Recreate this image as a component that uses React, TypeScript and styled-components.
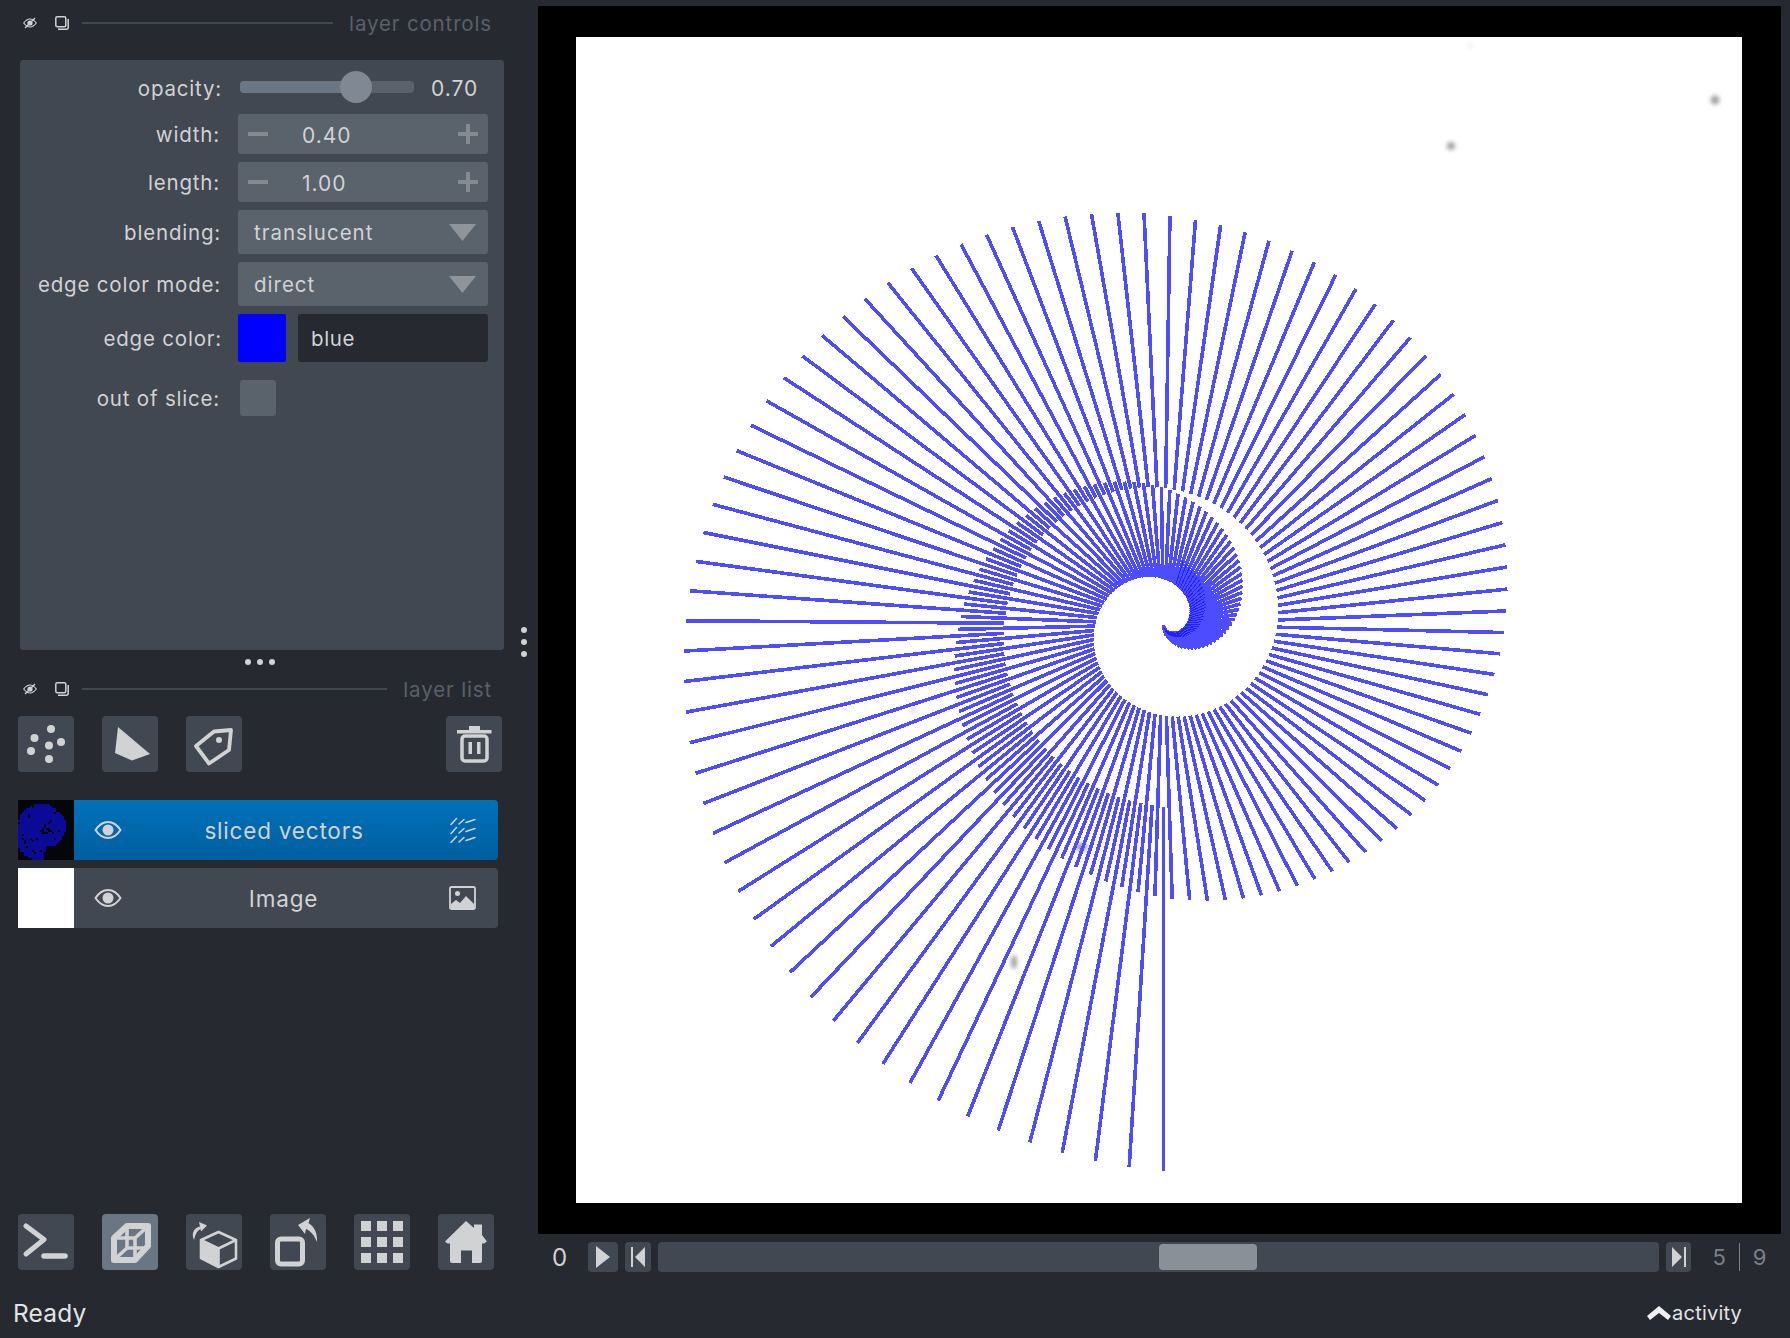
import React, { useMemo } from 'react';
import styled, { createGlobalStyle } from 'styled-components';

const GlobalStyle = createGlobalStyle`
  html, body {
    margin: 0;
    padding: 0;
    background: #262930;
  }
  body {
    width: 1790px;
    height: 1338px;
    overflow: hidden;
    font-family: Inter, "Liberation Sans", sans-serif;
    color: #d1d2d4;
  }
`;

const ICON = '#d1d2d4';

const Page = styled.div`
  width: 1790px;
  height: 1338px;
  display: flex;
  flex-direction: column;
`;

const Main = styled.div`
  height: 1272px;
  display: flex;
`;

const LeftColumn = styled.div`
  width: 515px;
  display: flex;
  flex-direction: column;
`;

const Splitter = styled.div`
  width: 23px;
  display: flex;
  flex-direction: column;
  align-items: center;
  gap: 6px;
  padding: 627px 5px 0 0;
  box-sizing: border-box;
`;

const Dot = styled.span`
  width: 6px;
  height: 6px;
  border-radius: 50%;
  background: #d1d2d4;
`;

const TitleBar = styled.div<{ $height: number }>`
  height: ${p => p.$height}px;
  display: flex;
  align-items: center;
  padding: 0 23px;
  flex: none;
`;

const TitleIcon = styled.svg`
  flex: none;
  display: block;
`;

const TitleRule = styled.div`
  flex: 1;
  height: 2px;
  background: #414851;
  margin: 0 16px 0 13px;
`;

const TitleText = styled.span`
  font-size: 20.5px;
  letter-spacing: 0.85px;
  color: #5a606a;
`;

const ControlsPanel = styled.div`
  margin: 14px 11px 0 20px;
  height: 590px;
  box-sizing: border-box;
  flex: none;
  background: #414851;
  border-radius: 3px;
  padding: 8px 16px 0 0;
  display: grid;
  grid-template-columns: 218px 250px;
  grid-auto-rows: min-content;
  row-gap: 8px;
`;

const Label = styled.div<{ $pad?: number; $top?: number }>`
  display: flex;
  align-items: center;
  justify-content: flex-end;
  padding-right: ${p => p.$pad ?? 18}px;
  padding-top: ${p => p.$top ?? 0}px;
  font-size: 20.5px;
  letter-spacing: 0.8px;
`;

const SliderRow = styled.div`
  height: 38px;
  display: flex;
  align-items: center;
  padding-left: 2px;
`;

const SliderTrack = styled.div`
  position: relative;
  width: 174px;
  height: 12px;
  border-radius: 4px;
  background: #5a626c;
`;

const SliderFill = styled.div`
  height: 100%;
  border-radius: 4px 0 0 4px;
  background: #6a7683;
`;

const SliderThumb = styled.div`
  position: absolute;
  top: -10px;
  width: 32px;
  height: 32px;
  margin-left: -16px;
  border-radius: 50%;
  background: #7f8893;
`;

const SliderValue = styled.span`
  margin: 2px 0 0 17px;
  font-size: 21px;
  letter-spacing: 1px;
`;

const SpinBox = styled.div`
  height: 40px;
  background: #5a626c;
  border-radius: 3px;
  display: flex;
  align-items: center;
  padding: 0 10px;
  font-size: 21px;
  letter-spacing: 1px;
`;

const SpinValue = styled.span`
  flex: 1;
  padding: 2px 0 0 34px;
`;

const Dropdown = styled.div`
  height: 44px;
  background: #5a626c;
  border-radius: 3px;
  display: flex;
  align-items: center;
  justify-content: space-between;
  padding: 0 12px 0 16px;
  font-size: 20.5px;
  letter-spacing: 1px;
`;

const ColorRow = styled.div`
  height: 48px;
  display: flex;
  gap: 12px;
`;

const Swatch = styled.div`
  width: 48px;
  background: #0000ff;
  border-radius: 2px;
`;

const ColorInput = styled.div`
  flex: 1;
  background: #262930;
  border-radius: 3px;
  display: flex;
  align-items: center;
  padding: 1px 0 0 13px;
  font-size: 20.5px;
  letter-spacing: 0.6px;
`;

const CheckRow = styled.div`
  height: 36px;
  margin-top: 10px;
  padding-left: 2px;
`;

const CheckBox = styled.div`
  width: 36px;
  height: 36px;
  background: #5a626c;
  border-radius: 3px;
`;

const HandleRow = styled.div`
  height: 26px;
  flex: none;
  display: flex;
  align-items: center;
  justify-content: center;
  gap: 6px;
  padding: 0 0 2px 4px;
  box-sizing: border-box;
`;

const SmallDot = styled.span`
  width: 6px;
  height: 6px;
  border-radius: 50%;
  background: #d1d2d4;
`;

const ButtonRow = styled.div<{ $right: number }>`
  display: flex;
  gap: 28px;
  padding: 0 ${p => p.$right}px 0 18px;
  flex: none;
`;

const IconButton = styled.div<{ $active?: boolean; $end?: boolean }>`
  width: 56px;
  height: 56px;
  flex: none;
  border-radius: 4px;
  background: ${p => (p.$active ? '#6a7683' : '#414851')};
  margin-left: ${p => (p.$end ? 'auto' : '0')};
  svg {
    display: block;
  }
`;

const LayerList = styled.div`
  flex: 1;
  margin: 28px 17px 0 18px;
  display: flex;
  flex-direction: column;
  gap: 8px;
`;

const LayerRow = styled.div<{ $selected?: boolean }>`
  height: 60px;
  display: flex;
  align-items: center;
  border-radius: 0 4px 4px 0;
  background: ${p => (p.$selected ? 'linear-gradient(#0071ba, #005f9e)' : '#414851')};
  font-size: 22.5px;
  letter-spacing: 0.8px;
`;

const Thumb = styled.div<{ $white?: boolean }>`
  width: 56px;
  height: 60px;
  flex: none;
  background: ${p => (p.$white ? '#ffffff' : '#05060a')};
  svg {
    display: block;
  }
`;

const LayerEye = styled.svg`
  flex: none;
  margin-left: 20px;
  display: block;
`;

const LayerName = styled.span`
  flex: 1;
  text-align: center;
  padding-right: 4px;
`;

const LayerType = styled.svg`
  flex: none;
  margin-right: 22px;
  display: block;
`;

const BottomButtons = styled(ButtonRow)`
  margin-bottom: 2px;
`;

const ViewerColumn = styled.div`
  flex: 1;
  display: flex;
  flex-direction: column;
  padding: 6px 9px 0 0;
`;

const Canvas = styled.div`
  height: 1228px;
  background: #000000;
  svg {
    display: block;
  }
`;

const Dims = styled.div`
  height: 30px;
  margin-top: 8px;
  display: flex;
  align-items: stretch;
  gap: 7px;
`;

const FrameIndex = styled.div`
  width: 43px;
  box-sizing: border-box;
  text-align: center;
  font-size: 24px;
  line-height: 32px;
`;

const DimButton = styled.div<{ $w: number }>`
  width: ${p => p.$w}px;
  flex: none;
  border-radius: 4px;
  background: #414851;
  display: flex;
  align-items: center;
  justify-content: center;
`;

const ScrollTrack = styled.div`
  flex: 1;
  border-radius: 4px;
  background: #414851;
  padding: 2px 0 2px 501px;
`;

const ScrollThumb = styled.div`
  width: 98px;
  height: 26px;
  border-radius: 4px;
  background: #8a9098;
`;

const DimRange = styled.div`
  width: 83px;
  display: flex;
  align-items: center;
  justify-content: center;
  font-size: 22px;
  color: #7b8087;
`;

const RangeRule = styled.span`
  width: 1px;
  height: 28px;
  background: #7b8087;
  margin: 0 13px;
`;

const StatusBar = styled.div`
  flex: 1;
  display: flex;
  justify-content: space-between;
  align-items: center;
  padding: 15px 48px 0 13px;
`;

const Ready = styled.span`
  font-size: 24.5px;
  letter-spacing: 0.2px;
  color: #e2e3e4;
`;

const Activity = styled.div`
  display: flex;
  align-items: center;
  gap: 1px;
  font-size: 20px;
  letter-spacing: 0.2px;
  color: #e2e3e4;
`;

// spiral of radial vectors, page coordinates
const CX = 1163.5;
const CY = 624.5;
const R_PER_TURN = 273;
const COUNT = 200;

type Seg = { x1: number; y1: number; x2: number; y2: number };

const spiralSegments = (): Seg[] => {
  const segs: Seg[] = [];
  for (let i = 0; i < COUNT; i++) {
    const turns = (2 * i) / (COUNT - 1);
    const a = turns * 2 * Math.PI;
    const r = turns * R_PER_TURN;
    segs.push({
      x1: CX + (r / 3) * Math.sin(a),
      y1: CY + (r / 3) * Math.cos(a),
      x2: CX + r * Math.sin(a),
      y2: CY + r * Math.cos(a),
    });
  }
  return segs;
};

// dark speckles read off the preview, in 2px cells
const THUMB_HOLES = [
  [0, 3], [0, 8], [0, 9], [0, 11], [1, 1], [2, 17], [2, 19], [3, 20], [3, 21], [4, 23], [5, 7], [5, 8], [5, 2],
  [7, 3], [7, 2], [6, 19], [7, 20], [7, 25], [8, 26], [9, 19], [11, 25], [13, 12], [13, 13], [14, 14], [15, 14],
  [15, 11], [16, 10], [16, 15], [17, 16], [17, 3], [18, 2], [18, 6], [19, 5], [19, 3], [20, 4], [20, 15], [18, 19],
];

// pixelated 2px preview of the same vectors
const thumbPath = (segs: Seg[]): string => {
  const scale = 0.0617;
  const cells = new Set<string>();
  segs.forEach(s => {
    for (let t = 0; t <= 1; t += 0.06) {
      const x = 26 + ((s.x1 + (s.x2 - s.x1) * t) - CX) * scale;
      const y = 29.4 + ((s.y1 + (s.y2 - s.y1) * t) - CY) * scale;
      const cx = Math.floor(x / 2) * 2;
      const cy = Math.floor(y / 2) * 2;
      if (cx >= 0 && cx < 56 && cy >= 0 && cy < 60) cells.add(`${cx},${cy}`);
    }
  });
  THUMB_HOLES.forEach(([cx, cy]) => cells.delete(`${cx * 2},${cy * 2}`));
  return Array.from(cells)
    .map(c => {
      const [x, y] = c.split(',');
      return `M${x} ${y}h2v2h-2z`;
    })
    .join('');
};

const HideIcon = () => (
  <TitleIcon width="14" height="12" viewBox="0 0 14 12" fill="none" stroke={ICON}>
    <path d="M0.7 6C3 3 5 2 7 2s4 1 6.3 4C11 9 9 10 7 10S3 9 0.7 6z" strokeWidth="1.2" />
    <circle cx="7" cy="6" r="2.6" fill={ICON} stroke="none" />
    <path d="M2 11L12 1" strokeWidth="1.3" />
  </TitleIcon>
);

const FloatIcon = () => (
  <TitleIcon width="14" height="14" viewBox="0 0 14 14" fill="none" stroke={ICON} strokeWidth="1.5" style={{ marginLeft: 18 }}>
    <rect x="0.8" y="0.8" width="10" height="10" rx="1.5" />
    <path d="M3 13.2h8.2a2 2 0 0 0 2-2V3" />
  </TitleIcon>
);

const Minus = () => (
  <svg width="20" height="4" viewBox="0 0 20 4"><rect width="20" height="4" fill="#868b92" /></svg>
);

const Plus = () => (
  <svg width="20" height="20" viewBox="0 0 20 20">
    <path d="M0 8h8V0h4v8h8v4h-8v8H8v-8H0z" fill="#868b92" />
  </svg>
);

const Caret = () => (
  <svg width="27" height="17" viewBox="0 0 27 17"><path d="M0 0h27L13.5 17z" fill="#8f939a" /></svg>
);

const Eye = () => (
  <LayerEye width="28" height="20" viewBox="0 0 28 20" fill="none" stroke={ICON}>
    <path d="M1.5 10C5.5 4 9.5 2 14 2s8.500 2 12.500 8C22.500 16 18.500 18 14 18S5.500 16 1.500 10z" strokeWidth="2" />
    <circle cx="14" cy="10" r="5.500" fill={ICON} stroke="none" />
  </LayerEye>
);

const VectorsIcon = () => (
  <LayerType width="26" height="26" viewBox="0 0 26 26" fill="none" stroke={ICON} strokeWidth="1.500" strokeLinecap="round">
    {[1, 10, 19].map(y => (
      <g key={y} transform={`translate(0 ${y})`}>
        <path d="M1 6.500L6.500 0.500" />
        <path d="M9 6L14 1.500" />
        <path d="M16 4.500L25 1.500" />
      </g>
    ))}
  </LayerType>
);

const ImageIcon = () => (
  <LayerType width="27" height="24" viewBox="0 0 27 24" fill="none">
    <rect x="1" y="1" width="25" height="22" rx="1.500" stroke={ICON} strokeWidth="1.800" />
    <circle cx="8.500" cy="7.500" r="2.500" fill={ICON} />
    <path d="M2 22v-4l5-4 4 3 6-7 8 8v4z" fill={ICON} />
  </LayerType>
);

const ButtonSvg: React.FC<{ children: React.ReactNode }> = ({ children }) => (
  <svg width="56" height="56" viewBox="0 0 56 56">{children}</svg>
);

const PointsGlyph = () => (
  <ButtonSvg>
    {[[33, 13], [16.500, 22], [43, 26], [31, 29.500], [13, 35], [31, 43]].map(([x, y]) => (
      <circle key={x * y} cx={x} cy={y} r="4" fill={ICON} />
    ))}
  </ButtonSvg>
);

const ShapesGlyph = () => (
  <ButtonSvg>
    <path d="M16 11L48 38L30 44.500L13 37z" fill={ICON} />
  </ButtonSvg>
);

const LabelsGlyph = () => (
  <ButtonSvg>
    <path d="M45 14L43 34L23 47.500L10 30L28 15.500z" fill="none" stroke={ICON} strokeWidth="3.800" strokeLinejoin="round" />
    <circle cx="33" cy="24" r="3" fill={ICON} />
  </ButtonSvg>
);

const DeleteGlyph = () => (
  <ButtonSvg>
    <path d="M23 10h11v4h11.500v3.500H11V14h12z" fill={ICON} />
    <rect x="16" y="20" width="25" height="25" rx="3" fill="none" stroke={ICON} strokeWidth="3.500" />
    <rect x="22.500" y="26" width="3.500" height="12" fill={ICON} />
    <rect x="31" y="26" width="3.500" height="12" fill={ICON} />
  </ButtonSvg>
);

const ConsoleGlyph = () => (
  <ButtonSvg>
    <path d="M8 12L26 25.500L8 40" fill="none" stroke={ICON} strokeWidth="5" strokeLinecap="round" strokeLinejoin="round" />
    <path d="M26 42h21" stroke={ICON} strokeWidth="5.500" strokeLinecap="round" />
  </ButtonSvg>
);

const NdisplayGlyph = () => (
  <ButtonSvg>
    <g fill="none" stroke={ICON} strokeLinejoin="round">
      <path d="M12 24L25 12H46V32L33 46H12z" strokeWidth="6" />
      <path d="M13 24H33V45M33 24L45 13M25 13V34H45M25 34L13 45" strokeWidth="3.600" />
    </g>
  </ButtonSvg>
);

const RollGlyph = () => (
  <ButtonSvg>
    <path d="M8 26C5 19 8 14 14 12.500L13 8L21 11.500L15 17.500L14.500 15C11 17 9.500 20 8 26z" fill={ICON} />
    <path d="M15 27L32 35V53L15 44z" fill={ICON} />
    <path d="M15 26L32.500 18L50 26V44.500L32.500 53L15 44z M15 26L32.500 34.500L50 26 M32.500 34.500V53" fill="none" stroke={ICON} strokeWidth="2.600" strokeLinejoin="round" />
  </ButtonSvg>
);

const TransposeGlyph = () => (
  <ButtonSvg>
    <rect x="7.500" y="25" width="25" height="25" rx="3.500" fill="none" stroke={ICON} strokeWidth="5" />
    <path d="M28 11L40 4L38.500 9C45 13 47.500 20 47 28C44 21 41 17 36 15L35 20z" fill={ICON} />
  </ButtonSvg>
);

const GridGlyph = () => (
  <ButtonSvg>
    {[7, 23, 39].flatMap(y =>
      [7, 23, 39].map(x => <rect key={`${x}-${y}`} x={x} y={y} width="10" height="10" fill={ICON} />)
    )}
  </ButtonSvg>
);

const HomeGlyph = () => (
  <ButtonSvg>
    <path
      fillRule="evenodd"
      d="M28 7L36 14V10.500H44V21L49 27.500L46 29.500H44V47a2 2 0 0 1-2 2H34V36.500H23V49H14a2 2 0 0 1-2-2V29.500H9.500L7 27.500z"
      fill={ICON}
    />
  </ButtonSvg>
);

const Smudge = styled.ellipse`
  fill: #a0a0a0;
  filter: blur(2px);
`;

const App: React.FC = () => {
  const segs = useMemo(spiralSegments, []);
  const preview = useMemo(() => thumbPath(segs), [segs]);

  return (
    <Page>
      <GlobalStyle />
      <Main>
        <LeftColumn>
          <TitleBar $height={46}>
            <HideIcon />
            <FloatIcon />
            <TitleRule />
            <TitleText>layer controls</TitleText>
          </TitleBar>
          <ControlsPanel>
            <Label $pad={16} $top={2}>opacity:</Label>
            <SliderRow>
              <SliderTrack>
                <SliderFill style={{ width: `${0.7 * 100 * 0.95}%` }} />
                <SliderThumb style={{ left: 116 }} />
              </SliderTrack>
              <SliderValue>0.70</SliderValue>
            </SliderRow>
            <Label $top={1}>width:</Label>
            <SpinBox>
              <Minus />
              <SpinValue>0.40</SpinValue>
              <Plus />
            </SpinBox>
            <Label>length:</Label>
            <SpinBox>
              <Minus />
              <SpinValue>1.00</SpinValue>
              <Plus />
            </SpinBox>
            <Label $pad={17}>blending:</Label>
            <Dropdown>
              translucent
              <Caret />
            </Dropdown>
            <Label $pad={17}>edge color mode:</Label>
            <Dropdown>
              direct
              <Caret />
            </Dropdown>
            <Label $pad={16}>edge color:</Label>
            <ColorRow>
              <Swatch />
              <ColorInput>blue</ColorInput>
            </ColorRow>
            <Label $pad={18} style={{ marginTop: 10 }}>out of slice:</Label>
            <CheckRow>
              <CheckBox />
            </CheckRow>
          </ControlsPanel>
          <HandleRow>
            <SmallDot />
            <SmallDot />
            <SmallDot />
          </HandleRow>
          <TitleBar $height={26}>
            <HideIcon />
            <FloatIcon />
            <TitleRule />
            <TitleText>layer list</TitleText>
          </TitleBar>
          <ButtonRow $right={13} style={{ marginTop: 14 }}>
            <IconButton><PointsGlyph /></IconButton>
            <IconButton><ShapesGlyph /></IconButton>
            <IconButton><LabelsGlyph /></IconButton>
            <IconButton $end><DeleteGlyph /></IconButton>
          </ButtonRow>
          <LayerList>
            <LayerRow $selected>
              <Thumb>
                <svg width="56" height="60" viewBox="0 0 56 60">
                  <path d={preview} fill="#0a0a96" />
                </svg>
              </Thumb>
              <Eye />
              <LayerName>sliced vectors</LayerName>
              <VectorsIcon />
            </LayerRow>
            <LayerRow>
              <Thumb $white />
              <Eye />
              <LayerName>Image</LayerName>
              <ImageIcon />
            </LayerRow>
          </LayerList>
          <BottomButtons $right={21}>
            <IconButton><ConsoleGlyph /></IconButton>
            <IconButton $active><NdisplayGlyph /></IconButton>
            <IconButton><RollGlyph /></IconButton>
            <IconButton><TransposeGlyph /></IconButton>
            <IconButton><GridGlyph /></IconButton>
            <IconButton><HomeGlyph /></IconButton>
          </BottomButtons>
        </LeftColumn>
        <Splitter>
          <Dot />
          <Dot />
          <Dot />
        </Splitter>
        <ViewerColumn>
          <Canvas>
            <svg width="1243" height="1228" viewBox="538 6 1243 1228">
              <rect x="576" y="37" width="1166" height="1166" fill="#ffffff" />
              <Smudge cx="1715" cy="100" rx="4.500" ry="4.500" />
              <Smudge cx="1451" cy="146" rx="4" ry="4" />
              <Smudge cx="1014" cy="962" rx="3" ry="7" />
              <Smudge cx="1081" cy="847" rx="7" ry="4" />
              <Smudge cx="913" cy="710" rx="3" ry="3" opacity="0.4" />
              <Smudge cx="1470" cy="46" rx="2" ry="2" opacity="0.3" />
              <g stroke="#4d4dff" strokeWidth="3.600" shapeRendering="crispEdges">
                {segs.map((s, i) => (
                  <line key={i} x1={s.x1} y1={s.y1} x2={s.x2} y2={s.y2} />
                ))}
              </g>
              <g stroke="#1f1fff" strokeWidth="1" shapeRendering="crispEdges">
                {segs.slice(4, 46).map((s, i) => (
                  <line
                    key={i}
                    x1={s.x1}
                    y1={s.y1}
                    x2={s.x1 + (s.x2 - s.x1) * 0.3}
                    y2={s.y1 + (s.y2 - s.y1) * 0.3}
                  />
                ))}
              </g>
            </svg>
          </Canvas>
          <Dims>
            <FrameIndex>0</FrameIndex>
            <DimButton $w={30}>
              <svg width="14" height="22" viewBox="0 0 14 22"><path d="M0 0L14 11L0 22z" fill={ICON} /></svg>
            </DimButton>
            <DimButton $w={26}>
              <svg width="14" height="20" viewBox="0 0 14 20"><path d="M0 0h2v20H0zM14 0v20L4 10z" fill={ICON} /></svg>
            </DimButton>
            <ScrollTrack>
              <ScrollThumb />
            </ScrollTrack>
            <DimButton $w={25}>
              <svg width="14" height="20" viewBox="0 0 14 20"><path d="M0 0v20L10 10zM12 0h2v20h-2z" fill={ICON} /></svg>
            </DimButton>
            <DimRange>
              5<RangeRule />9
            </DimRange>
          </Dims>
        </ViewerColumn>
      </Main>
      <StatusBar>
        <Ready>Ready</Ready>
        <Activity>
          <svg width="24" height="14" viewBox="0 0 24 14"><path d="M12 0L24 10L21 14L12 7L3 14L0 10z" fill="#f0f0f0" /></svg>
          activity
        </Activity>
      </StatusBar>
    </Page>
  );
};

export default App;
